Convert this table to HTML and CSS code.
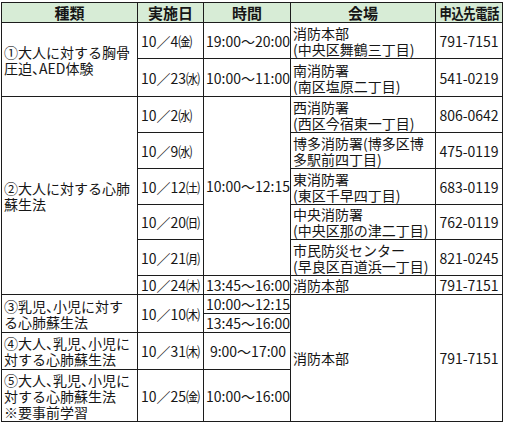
FILE: index.html
```html
<!DOCTYPE html>
<html lang="ja">
<head>
<meta charset="utf-8">
<title>講習日程</title>
<link rel="stylesheet" href="styles.css">
</head>
<body>
<div class="sheet">
  <div class="c head">種類</div>
  <div class="c head">実施日</div>
  <div class="c head">時間</div>
  <div class="c head">会場</div>
  <div class="c head"><span class="squeeze">申込先電話</span></div>

  <div class="c kind span2"><p class="t">①大人に対する胸骨<br>圧迫<span class="h">、</span>AED体験</p></div>
  <div class="c date">10／4㈮</div>
  <div class="c time">19:00～20:00</div>
  <div class="c place">消防本部<br>(中央区舞鶴三丁目)</div>
  <div class="c tel">791-7151</div>

  <div class="c date">10／23㈬</div>
  <div class="c time">10:00～11:00</div>
  <div class="c place">南消防署<br>(南区塩原二丁目)</div>
  <div class="c tel">541-0219</div>

  <div class="c kind span6">②大人に対する心肺<br>蘇生法</div>
  <div class="c date">10／2㈬</div>
  <div class="c time span5">10:00～12:15</div>
  <div class="c place">西消防署<br>(西区今宿東一丁目)</div>
  <div class="c tel">806-0642</div>

  <div class="c date">10／9㈬</div>
  <div class="c place">博多消防署(博多区博<br>多駅前四丁目)</div>
  <div class="c tel">475-0119</div>

  <div class="c date">10／12㈯</div>
  <div class="c place">東消防署<br>(東区千早四丁目)</div>
  <div class="c tel">683-0119</div>

  <div class="c date">10／20㈰</div>
  <div class="c place">中央消防署<br>(中央区那の津二丁目)</div>
  <div class="c tel">762-0119</div>

  <div class="c date">10／21㈪</div>
  <div class="c place">市民防災センター<br>(早良区百道浜一丁目)</div>
  <div class="c tel">821-0245</div>

  <div class="c date">10／24㈭</div>
  <div class="c time">13:45～16:00</div>
  <div class="c place">消防本部</div>
  <div class="c tel">791-7151</div>

  <div class="c kind span2"><p class="t">③乳児<span class="h">、</span>小児に対す<br>る心肺蘇生法</p></div>
  <div class="c date span2">10／10㈭</div>
  <div class="c time">10:00～12:15</div>
  <div class="c place span4">消防本部</div>
  <div class="c tel span4">791-7151</div>

  <div class="c time">13:45～16:00</div>

  <div class="c kind"><p class="t">④大人<span class="h">、</span>乳児<span class="h">、</span>小児に<br>対する心肺蘇生法</p></div>
  <div class="c date">10／31㈭</div>
  <div class="c time mid">9:00～17:00</div>

  <div class="c kind"><p class="t">⑤大人<span class="h">、</span>乳児<span class="h">、</span>小児に<br>対する心肺蘇生法<br>※要事前学習</p></div>
  <div class="c date">10／25㈮</div>
  <div class="c time">10:00～16:00</div>
</div>
</body>
</html>
```

FILE: styles.css
```css
html, body {
  margin: 0;
  padding: 0;
  background: #ffffff;
}

body {
  font-family: "Noto Sans CJK JP", "Noto Sans", sans-serif;
  font-size: 14px;
  line-height: 16px;
  color: #161616;
}

.sheet {
  margin: 2px 0 0 1px;
  width: 500px;
  padding: 1px;
  background: #1c1c1c;
  display: grid;
  grid-template-columns: 135px 65px 86px 144px 66px;
  grid-template-rows: 19px 35px 37px 35px 35px 35px 34px 35px 18px 18px 18px 36px 51px;
  gap: 1px;
}

.c {
  background: #ffffff;
  display: flex;
  align-items: center;
  padding: 0 2px;
  white-space: nowrap;
  overflow: hidden;
}

.t {
  margin: 0;
}

.h {
  font-feature-settings: "halt";
}

.head {
  background: #d7ecd6;
  justify-content: center;
  font-weight: 700;
  font-size: 15px;
}

.squeeze {
  display: inline-block;
  transform: scaleX(0.82);
  letter-spacing: -0.5px;
}

.kind {
  padding-left: 2px;
}

.date {
  padding-left: 3px;
}

.time {
  padding-left: 2px;
}

.time.mid {
  justify-content: center;
  padding-left: 4px;
}

.place {
  padding-left: 2px;
}

.tel {
  justify-content: center;
}

.span2 { grid-row: span 2; }
.span4 { grid-row: span 4; }
.span5 { grid-row: span 5; }
.span6 { grid-row: span 6; }
```
